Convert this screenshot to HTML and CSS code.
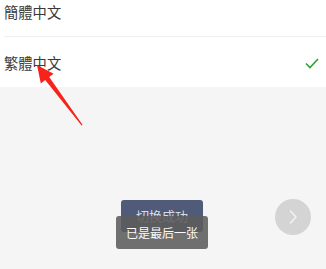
FILE: index.html
```html
<!DOCTYPE html>
<html>
<head>
<meta charset="utf-8">
<link rel="stylesheet" href="styles.css">
</head>
<body>
<div class="page">
  <div class="list">
    <div class="row row-first"><span class="label">簡體中文</span></div>
    <div class="row"><span class="label">繁體中文</span>
      <svg class="check" width="14" height="11" viewBox="0 0 14 11"><path d="M1 5.5 L5 9.5 L13 1" fill="none" stroke="#2aa52e" stroke-width="1.6"/></svg>
    </div>
  </div>
  <div class="pill"></div>
  <svg class="arrow" width="326" height="269" viewBox="0 0 326 269">
    <polygon points="37,78 53.6,86.8 49.2,90.1 82.5,137.7 81.6,138.4 45.2,93.1 40.8,96.4" fill="#f7231a"/>
  </svg>
  <div class="toast toast-blue">切换成功</div>
  <div class="toast toast-gray">已是最后一张</div>
  <div class="next">
    <svg width="10" height="16" viewBox="0 0 10 16"><path d="M2 1.5 L8 8 L2 14.5" fill="none" stroke="#f4f4f4" stroke-width="1.4"/></svg>
  </div>
</div>
</body>
</html>
```
FILE: styles.css
```css
html, body {
  margin: 0;
  padding: 0;
  background: #f5f5f5;
  overflow: hidden;
}
.page {
  position: relative;
  width: 326px;
  height: 269px;
  font-family: "Noto Sans CJK TC", "Noto Sans CJK SC", sans-serif;
}
.list {
  background: #fff;
  margin-top: -13px;
}
.row {
  height: 50px;
  margin-left: 4px;
  padding-right: 7px;
  display: flex;
  align-items: center;
  justify-content: space-between;
  box-sizing: border-box;
}
.row-first {
  border-bottom: 1px solid #efefef;
}
.label {
  font-size: 14.3px;
  color: #383838;
  line-height: 1;
  padding-top: 2px;
}
.check {
  margin-top: 2px;
}
.pill {
  position: absolute;
  top: -20px;
  left: 278px;
  width: 46px;
  height: 24px;
  border-radius: 12px;
  background: #aaaaaa;
}
.arrow {
  position: absolute;
  left: 0;
  top: 0;
}
.toast {
  position: absolute;
  display: flex;
  align-items: center;
  justify-content: center;
  border-radius: 3px;
  font-family: "Noto Sans CJK SC", sans-serif;
}
.toast-blue {
  left: 121px;
  top: 213px;
  width: 82px;
  height: 32px;
  background: #4f5b78;
  color: #d8dbe2;
  font-size: 13px;
  padding-bottom: 2px;
  box-sizing: border-box;
}
.toast-gray {
  left: 116px;
  top: 229px;
  width: 92px;
  height: 33px;
  background: rgba(92, 92, 92, 0.88);
  color: #fafafa;
  font-size: 12px;
}
.next {
  position: absolute;
  left: 275px;
  top: 212px;
  width: 36px;
  height: 36px;
  border-radius: 50%;
  background: #d4d4d4;
  display: flex;
  align-items: center;
  justify-content: center;
}
```
